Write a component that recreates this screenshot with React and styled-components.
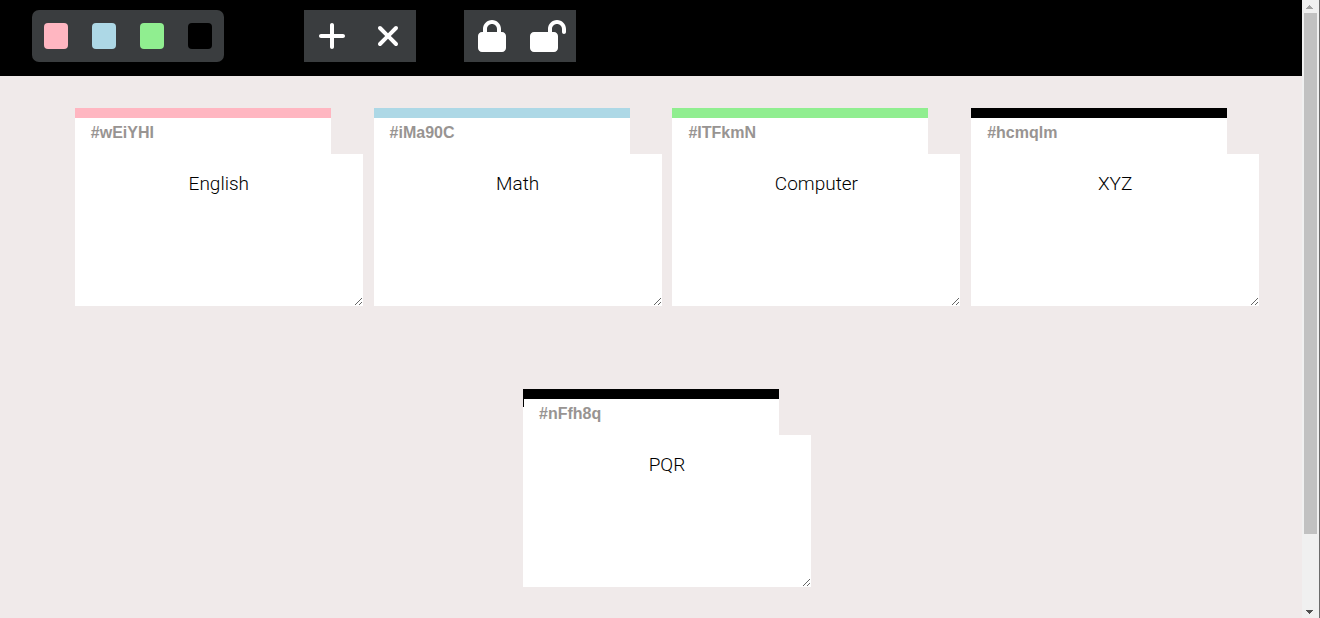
import React from "react";
import styled, { createGlobalStyle } from "styled-components";
import { FaPlus, FaXmark, FaLock, FaLockOpen } from "react-icons/fa6";

const GlobalStyle = createGlobalStyle`
  *, *::before, *::after { box-sizing: border-box; }
  body { margin: 0; background: #f0eaea; font-family: "Liberation Sans", Arial, sans-serif; }
`;

const Page = styled.div`
  display: flex;
  min-height: 100vh;
`;

const Content = styled.div`
  flex: 1;
  min-width: 0;
`;

const Toolbar = styled.header`
  display: flex;
  padding: 10px 32px 14px;
  background: #000;
`;

const Palette = styled.div`
  display: flex;
  align-items: center;
  gap: 24px;
  height: 52px;
  padding: 0 12px;
  margin-right: 80px;
  border-radius: 7px;
  background: #3a3d3f;
`;

const Swatch = styled.button`
  width: 24px;
  height: 26px;
  padding: 0;
  border: 0;
  border-radius: 4px;
  background: ${(p) => p.$color};
  cursor: pointer;
`;

const ActionGroup = styled.div`
  display: flex;
  height: 52px;
  margin-right: 48px;
  background: #3a3d3f;
`;

const ActionButton = styled.button`
  display: flex;
  align-items: center;
  justify-content: center;
  width: 56px;
  padding: 0;
  border: 0;
  background: transparent;
  color: #fff;
  cursor: pointer;

  svg {
    width: 36px;
    height: 32px;
  }
`;

const Board = styled.main`
  display: flex;
  flex-wrap: wrap;
  justify-content: space-evenly;
  gap: 83px 0;
  padding: 32px 32px 30px;
`;

const Ticket = styled.article`
  width: 256px;
`;

const TicketColor = styled.div`
  height: 10px;
  background: ${(p) => p.$color};
`;

const TicketId = styled.label`
  display: block;
  height: 36px;
  padding: 6px 16px;
  background: ${(p) =>
    p.$marked ? "linear-gradient(#000, #000) 0 0 / 1px 8px no-repeat #fff" : "#fff"};
  color: #989492;
  font-size: 16px;
  font-weight: 700;
  line-height: 18px;
`;

const TicketTask = styled.textarea`
  display: block;
  width: 288px;
  height: 152px;
  padding: 19px 16px;
  border: 0;
  outline: 0;
  background: #fff;
  color: #000;
  font-family: Roboto, sans-serif;
  font-size: 19px;
  font-weight: 300;
  line-height: 22px;
  text-align: center;
`;

const ScrollRail = styled.div`
  position: sticky;
  top: 0;
  display: flex;
  flex-direction: column;
  align-items: center;
  width: 18px;
  height: 100vh;
  padding-right: 1px;
  border-right: 1px solid #6b6b6b;
  background: #f0f0f0;
`;

const ScrollArrow = styled.div`
  display: flex;
  align-items: center;
  justify-content: center;
  height: 13px;

  svg { display: block; }
`;

const ScrollTrack = styled.div`
  display: flex;
  flex-direction: column;
  flex: 1;
`;

const ScrollThumb = styled.div`
  width: 13px;
  height: 88%;
  background: #c1c1c1;
`;

const colors = [
  { name: "Pink", value: "lightpink" },
  { name: "Blue", value: "lightblue" },
  { name: "Green", value: "lightgreen" },
  { name: "Black", value: "black" },
];

const tickets = [
  { id: "wEiYHI", color: "lightpink", task: "English" },
  { id: "iMa90C", color: "lightblue", task: "Math" },
  { id: "ITFkmN", color: "lightgreen", task: "Computer" },
  { id: "hcmqlm", color: "black", task: "XYZ" },
  { id: "nFfh8q", color: "black", task: "PQR", marked: true },
];

export default function App() {
  return (
    <>
      <GlobalStyle />
      <Page>
        <Content>
          <Toolbar>
            <Palette>
              {colors.map((c) => (
                <Swatch key={c.name} type="button" $color={c.value} aria-label={c.name} />
              ))}
            </Palette>
            <ActionGroup>
              <ActionButton type="button" aria-label="Add ticket"><FaPlus /></ActionButton>
              <ActionButton type="button" aria-label="Remove ticket"><FaXmark /></ActionButton>
            </ActionGroup>
            <ActionGroup>
              <ActionButton type="button" aria-label="Lock tickets"><FaLock /></ActionButton>
              <ActionButton type="button" aria-label="Unlock tickets"><FaLockOpen /></ActionButton>
            </ActionGroup>
          </Toolbar>
          <Board>
            {tickets.map((t) => (
              <Ticket key={t.id}>
                <TicketColor $color={t.color} />
                <TicketId htmlFor={t.id} $marked={t.marked}>#{t.id}</TicketId>
                <TicketTask id={t.id} defaultValue={t.task} spellCheck={false} />
              </Ticket>
            ))}
          </Board>
        </Content>
        <ScrollRail aria-hidden="true">
          <ScrollArrow>
            <svg width="8" height="4" viewBox="0 0 8 4" shapeRendering="crispEdges">
              <path d="M3 0h1v1h1v1h1v1h1v1H0V3h1V2h1V1h1z" fill="#a3a3a3" />
            </svg>
          </ScrollArrow>
          <ScrollTrack>
            <ScrollThumb />
          </ScrollTrack>
          <ScrollArrow>
            <svg width="8" height="4" viewBox="0 0 8 4" shapeRendering="crispEdges">
              <path d="M0 0h7v1H6v1H5v1H4v1H3V3H2V2H1V1H0z" fill="#505050" />
            </svg>
          </ScrollArrow>
        </ScrollRail>
      </Page>
    </>
  );
}
